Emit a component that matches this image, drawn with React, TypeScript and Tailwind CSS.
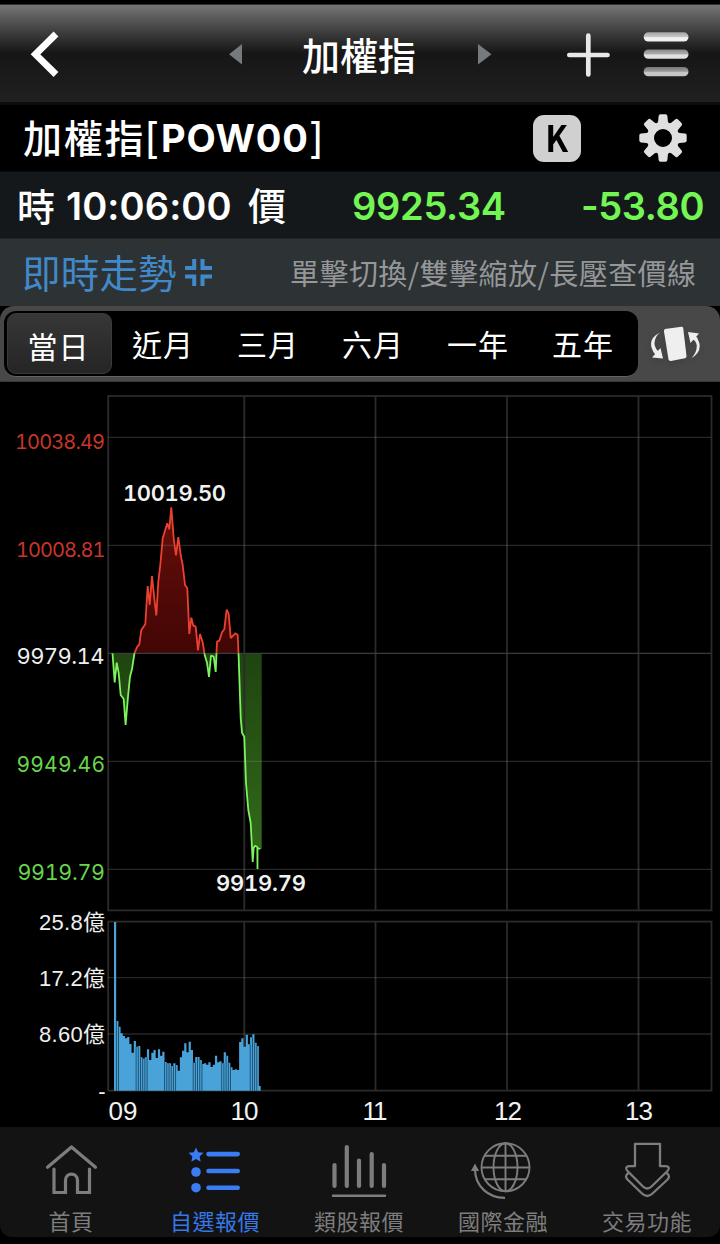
import React from "react";

const CJK = "font-['Inter','Noto_Sans_CJK_TC',sans-serif]";

const pricePoints = [
  [112.5, 653.3], [114.7, 682.5], [116.7, 662.7], [118.7, 673.3], [120.7, 695], [123.7, 699], [125.6, 725], [128, 696.7],
  [130, 676.7], [132, 669], [134.5, 653], [137.3, 646.7], [139.3, 644.3], [141.3, 630], [145.3, 624.3], [147.7, 586],
  [149.7, 605], [152, 576], [154.3, 598.3], [156.3, 615.5], [158.3, 581.7], [160.3, 565], [162.7, 538.3], [167.3, 523.3],
  [169.3, 529.3], [171.3, 507.3], [173.7, 538.3], [176, 555.5], [178.3, 537], [180.7, 555], [182.7, 565], [185, 585],
  [187.3, 588.3], [189.3, 634], [191.3, 617.7], [193.3, 625.7], [195.7, 626.7], [198, 650.5], [200, 634], [202.7, 642.3],
  [204.7, 655], [207, 662.7], [209, 677], [211, 655.7], [213.7, 656.7], [215.7, 672], [217, 641.7], [219.3, 640.7],
  [222, 632.3], [224.3, 629.3], [226.7, 609.5], [228.7, 614], [230.7, 638], [235.3, 633.3], [237.7, 635], [238.7, 658],
  [240.7, 718], [242, 732.7], [244.3, 736.7], [246, 783], [248.3, 810], [250.7, 823], [252.7, 862], [253.7, 848],
  [255, 845.7], [257.3, 847], [257.5, 869], [257.5, 848], [260.3, 849],
];
const line = pricePoints.map((p) => p.join(",")).join(" ");
const area = `112.5,653.3 ${line} 261.7,849 261.7,653.3`;

const volumeTops = [
  66, 363, 380, 400, 408, 415, 411, 432, 458, 423, 440, 438, 472, 476, 472, 448, 480, 458, 450, 474, 448, 467, 455, 486,
  490, 490, 498, 490, 495, 512, 472, 452, 430, 457, 425, 450, 488, 471, 471, 480, 492, 490, 494, 487, 501, 494, 467, 487,
  484, 490, 457, 467, 488, 502, 510, 508, 510, 426, 415, 440, 404, 433, 412, 403, 428, 438, 558,
];
const slits = [1, 2, 10, 11, 12, 13, 14, 15, 23, 24, 25, 26, 27, 28, 36, 37, 38, 39, 40, 49, 50, 51, 52, 53, 62, 63, 64, 65];
const volumePath =
  volumeTops.map((t, i) => `${i ? "L" : "M114 1090.8L"}${114 + i * 2.195} ${900 + t / 3}H${114 + (i + 1) * 2.195 - (i === 66 ? 0.4 : 0)}`).join("") + "V1090.8Z";
const hours: [string, number, number][] = [["09", 123, 29], ["10", 244.5, 28], ["11", 375, 25], ["12", 508, 28], ["13", 639, 28]];

function Chart() {
  const verticals = [244.3, 375.5, 507, 638.5];
  return (
    <svg width="720" height="745" viewBox="0 382 720 745" className="block bg-black">
      <defs>
        <clipPath id="above"><rect x="100" y="390" width="200" height="263.3" /></clipPath>
        <clipPath id="below"><rect x="100" y="653.3" width="200" height="240" /></clipPath>
        <linearGradient id="fall" gradientUnits="userSpaceOnUse" x1="0" y1="653" x2="0" y2="860">
          <stop offset="0" stopColor="#1f4410" /><stop offset="1" stopColor="#326b1b" />
        </linearGradient>
        <linearGradient id="rise" gradientUnits="userSpaceOnUse" x1="0" y1="510" x2="0" y2="653">
          <stop offset="0" stopColor="#650e0b" /><stop offset="1" stopColor="#420604" />
        </linearGradient>
      </defs>
      <polygon points={area} fill="url(#rise)" clipPath="url(#above)" />
      <polygon points={area} fill="url(#fall)" clipPath="url(#below)" />
      <g stroke="#2b2b2b" strokeWidth="1.8" fill="none">
        <rect x="108.2" y="396" width="603.3" height="514.4" />
        <rect x="108.2" y="921.6" width="603.3" height="169" />
        {verticals.map((x) => <path key={x} d={`M${x} 396V910.4M${x} 921.6V1090.6`} />)}
      </g>
      <g stroke="#a0a0a0" strokeOpacity=".24" strokeWidth="1.3">
        {[437.3, 545.3, 761.3, 869.4, 977.7, 1034].map((y) => <path key={y} d={`M108 ${y}H711`} />)}
      </g>
      <path d="M108 653.4H711" stroke="#393c42" strokeWidth="1.4" />
      <polyline points={line} fill="none" stroke="#ed4030" strokeWidth="1.8" strokeLinejoin="bevel" clipPath="url(#above)" />
      <polyline points={line} fill="none" stroke="#7bf35a" strokeWidth="1.8" strokeLinejoin="bevel" clipPath="url(#below)" />
      <path d={volumePath} fill="#49a3d9" />
      {slits.map((i) => (
        <rect key={i} x={113.7 + i * 2.195} y={900 + Math.max(volumeTops[i], volumeTops[i - 1]) / 3} width=".9" height={190.8 - Math.max(volumeTops[i], volumeTops[i - 1]) / 3} fill="#1c4a68" />
      ))}
      <g className="font-['Inter',sans-serif] [font-feature-settings:'tnum']" textAnchor="end">
        <text x="105" y="448.5" textLength="90" className="text-[20px]" fill="#c9352b">10038.49</text>
        <text x="105.5" y="556.5" textLength="89.5" className="text-[20px]" fill="#c9352b">10008.81</text>
        <text x="104.5" y="664" textLength="88" className="text-[22px]" fill="#efefef">9979.14</text>
        <text x="105" y="772" textLength="88.5" className="text-[21px]" fill="#66d64b">9949.46</text>
        <text x="105" y="880.3" textLength="87.5" className="text-[21.5px]" fill="#66d64b">9919.79</text>
      </g>
      <g className="font-['Inter',sans-serif] text-[22px] font-semibold [font-feature-settings:'tnum']" fill="#f2f2f2">
        <text x="123" y="501" textLength="103">10019.50</text>
        <text x="216" y="890.5" textLength="90">9919.79</text>
      </g>
      <g className="font-['Liberation_Sans','Noto_Sans_CJK_TC',sans-serif] text-[22px]" fill="#efefef" textAnchor="end">
        <text x="105" y="930" textLength="66">25.8億</text>
        <text x="105" y="986" textLength="66">17.2億</text>
        <text x="105" y="1042" textLength="66">8.60億</text>
        <text x="105.5" y="1099">-</text>
      </g>
      <g className="font-['Liberation_Sans',sans-serif] text-[26px]" fill="#f2f2f2" textAnchor="middle">
        {hours.map(([h, x, w]) => <text key={h} x={x} y="1120" textLength={w}>{h}</text>)}
      </g>
    </svg>
  );
}

function Gear() {
  return (
    <svg width="48" height="48" viewBox="-24 -24 48 48" fill="#e0e0e0">
      {[0, 45, 90, 135, 180, 225, 270, 315].map((a) => (
        <path key={a} transform={`rotate(${a})`} d="M-6.8-13L-4.9-16.5-4.4-22Q-4.2-23.7-2.5-23.7H2.5Q4.2-23.7 4.4-22L4.9-16.5 6.8-13Z" />
      ))}
      <circle r="12.5" fill="none" stroke="#e0e0e0" strokeWidth="7" />
    </svg>
  );
}

const navIcons = [
  <g key="home" fill="none" stroke="#7d7d7d" strokeWidth="3.2" strokeLinecap="round" strokeLinejoin="round">
    <path d="M47.5 1167.3L71.5 1147 95.5 1167.3" /><path d="M54 1169V1192.5H65.5V1180.5C65.5 1172 77.5 1172 77.5 1180.5V1192.5H89.5V1169" strokeLinejoin="miter" />
  </g>,
  <g key="list" fill="#397cf3">
    <path d="M196 1147.5L198.2 1152.3 203.5 1152.8 199.6 1156.5 200.7 1161.8 196 1159.1 191.3 1161.8 192.4 1156.5 188.5 1152.8 193.8 1152.3Z" />
    <circle cx="196" cy="1172" r="4.8" /><circle cx="196" cy="1187.7" r="4.8" />
    <path d="M208.5 1154.1H237.7M208.5 1171H237.7M208.5 1187.7H237.7" stroke="#397cf3" strokeWidth="4.6" strokeLinecap="round" />
  </g>,
  <g key="bars" stroke="#7d7d7d" strokeWidth="4.2" strokeLinecap="round">
    <path d="M334.5 1165V1186M346.8 1147V1186M359 1160.5V1186M371.7 1154V1186M384 1165V1186" /><path d="M333 1195.7H385" strokeWidth="2.4" />
  </g>,
  <g key="globe" stroke="#7d7d7d" fill="none" strokeWidth="1.9">
    <circle cx="505.5" cy="1167.3" r="24" /><ellipse cx="505.5" cy="1167.3" rx="12" ry="24" />
    <path d="M505.5 1143V1191M481.5 1167.5H529.5M485 1155.7H526M485 1179.2H526" />
    <path d="M475 1169C475 1186 488 1198 505 1197.8" strokeWidth="2.2" /><path d="M475 1165.5L472.5 1170H477.5Z" fill="#7d7d7d" />
  </g>,
  <g key="trade" stroke="#7d7d7d" fill="none" strokeWidth="2.3" strokeLinejoin="round">
    <path d="M635 1143.8H660V1166.2H665.5C669 1166.2 670 1168.5 667.5 1171L651.5 1186.5Q647.3 1190.5 643 1186.5L627.5 1171C625 1168.5 626 1166.2 629.5 1166.2H635Z" />
    <path d="M628.5 1173C625 1175.5 625.5 1177.5 628 1180L642 1193.5Q647.3 1198.5 652.5 1193.5L667 1180C669.5 1177.5 670 1175.5 666.5 1173" />
  </g>,
];
const navItems = ["首頁", "自選報價", "類股報價", "國際金融", "交易功能"];

export default function App() {
  return (
    <div className={`flex h-[1244px] w-[720px] flex-col overflow-hidden bg-black text-white ${CJK}`}>
      <div className="h-1 shrink-0 bg-black" />
      <header className="flex h-[101px] shrink-0 items-center border-t border-b-[3px] border-t-[#303030] border-b-[#0c0c0c] bg-linear-to-b from-[#767676] from-0% via-[#161616] via-50% to-[#202020] to-100%">
        <svg width="302" height="97" viewBox="0 5 302 97" className="shrink-0">
          <path d="M56 34L35.5 54.3 56 74.5" fill="none" stroke="#fff" strokeWidth="6.8" />
          <path d="M229 54.3L242 44V64.5Z" fill="#747a7e" />
        </svg>
        <h1 className="w-[116px] shrink-0 pt-1 text-[38px] leading-[50px] font-medium whitespace-nowrap">加權指</h1>
        <svg width="302" height="97" viewBox="418 5 302 97" className="shrink-0">
          <defs>
            <linearGradient id="barA" x2="0" y2="1"><stop stopColor="#a5a5a5" /><stop offset=".45" stopColor="#c5c5c5" /><stop offset=".6" stopColor="#f4f4f4" /><stop offset="1" stopColor="#eee" /></linearGradient>
            <linearGradient id="barB" x2="0" y2="1"><stop stopColor="#888" /><stop offset=".45" stopColor="#aaa" /><stop offset=".6" stopColor="#e2e2e2" /><stop offset="1" stopColor="#ddd" /></linearGradient>
            <linearGradient id="barC" x2="0" y2="1"><stop stopColor="#777" /><stop offset=".45" stopColor="#999" /><stop offset=".6" stopColor="#c8c8c8" /><stop offset="1" stopColor="#c4c4c4" /></linearGradient>
          </defs>
          <path d="M478 44L491.5 54.3 478 64.5Z" fill="#747a7e" />
          <path d="M569.3 55H607.5M588.3 35.7V74.5" stroke="#e8e8e8" strokeWidth="4.7" strokeLinecap="round" />
          <rect x="643.7" y="32.3" width="44.8" height="9.2" rx="4.6" fill="url(#barA)" />
          <rect x="643.7" y="49.5" width="44.8" height="9.3" rx="4.6" fill="url(#barB)" />
          <rect x="643.7" y="67" width="44.8" height="9.3" rx="4.6" fill="url(#barC)" />
        </svg>
      </header>

      <section className="flex h-[66px] shrink-0 items-center pl-[23px]">
        <h2 className="flex w-[510px] items-center text-[39px] leading-[56px] font-medium whitespace-nowrap">
          <span className="w-[121px] pt-0.5 tracking-[1.8px]">加權指</span>
          <span className="w-[17px] text-[42px] leading-[56px] font-normal">[</span>
          <span className="text-[38px] font-bold tracking-[0.8px]">POW00</span>
          <span className="text-[42px] leading-[56px] font-normal">]</span>
        </h2>
        <div className="flex h-[47px] w-[48px] items-center justify-center rounded-[11px] bg-[#d0d0d0] font-['Noto_Sans_CJK_TC',sans-serif] text-black">
          <span className="scale-x-90 pb-[5px] text-[37px] leading-[42px] font-bold">K</span>
        </div>
        <div className="ml-[58px]"><Gear /></div>
      </section>

      <section className="flex h-[68px] shrink-0 items-center border-b border-t border-t-[#080b0d] border-b-[#1d2326] bg-[#14181b] text-[38px] leading-[56px] font-medium whitespace-nowrap">
        <span className="ml-[17px] w-[49px] pt-1 text-[38px]">時</span>
        <span className="w-[182px] pt-0.5 text-[38px] font-semibold tracking-[0.1px]">10:06:00</span>
        <span className="w-[104px] pt-0.5 text-[38px]">價</span>
        <span className="w-[229px] pt-0.5 text-[38px] font-semibold tracking-[-0.3px] text-[#73f654]">9925.34</span>
        <span className="pt-0.5 text-[38px] font-semibold tracking-[-0.4px] text-[#73f654] [font-feature-settings:'calt'_0]">-53.80</span>
      </section>

      <section className="flex h-[67px] shrink-0 items-center bg-[#2d3235] whitespace-nowrap">
        <span className="ml-[22px] w-[162px] pt-0.5 text-[38.5px] leading-[56px] tracking-[0.2px] text-[#4189c9]">即時走勢</span>
        <svg width="29" height="29" viewBox="0 0 29 29" fill="none" stroke="#4189c9" strokeWidth="4">
          <path d="M1 10H10.2V1M18.5 1V10H28M1 18.5H10.2V28M18.5 28V18.5H28" />
        </svg>
        <span className="ml-[77px] pb-px font-['Noto_Sans_CJK_TC',sans-serif] text-[29px] leading-10 font-normal tracking-[0.45px] text-[#959798]">單擊切換/雙擊縮放/長壓查價線</span>
      </section>

      <section className="flex h-[76px] shrink-0 items-center rounded-t-[14px] border-b border-[#393939] bg-[#484848] pl-1">
        <div className="flex h-[66px] w-[634px] items-center rounded-[12px] border-b border-[#646464] bg-black text-[30px] leading-10 tracking-[1px]">
          <button className="ml-[3px] flex h-[61px] w-[105px] items-center justify-center rounded-[9px] border border-[#3b3b3b] bg-linear-to-b from-[#373737] to-[#252525] pt-[7px] pr-0.5">當日</button>
          {["近月", "三月", "六月", "一年", "五年"].map((t) => <button key={t} className="w-[105px] shrink-0 pt-1 pr-[3px] text-center">{t}</button>)}
        </div>
        <svg width="52" height="40" viewBox="649 324 52 40" className="ml-[11px] drop-shadow-md">
          <path d="M665 329L681.5 326.8Q683 326.8 683.2 328L686.5 356Q686.5 358 685 358.3L671 361Q669 361 668.5 359.5L664 331.5Q663.7 329.5 665 329Z" fill="#efefef" />
          <path d="M660 332.5Q649 338 651.5 347.5Q653 353 656.5 356L659.5 352Q655 349 654.5 344Q654.3 337 660 332.5Z" fill="#ededed" />
          <path d="M652 357.5L663 358.5 660.5 348Z" fill="#eee" />
          <path d="M691.5 358Q701.5 352 699.3 343Q698 337.5 694.5 334.5L692 338.5Q696.3 341 696.8 345.5Q697 352.5 691.5 358Z" fill="#ededed" />
          <path d="M688 332L699 333.5 690.5 343Z" fill="#eee" />
        </svg>
      </section>

      <main className="h-[745px] shrink-0"><Chart /></main>

      <nav className="flex h-[110px] shrink-0 rounded-b-[12px] bg-[#131313]">
        {navItems.map((label, i) => (
          <button key={label} className={`flex w-36 shrink-0 flex-col items-center whitespace-nowrap ${i === 1 ? "text-[#3678e8]" : "text-[#7d7d7d]"}`}>
            <svg width="144" height="77" viewBox={`${i * 144} 1127 144 77`} className="shrink-0">{navIcons[i]}</svg>
            <span className="pt-0.5 pr-0.5 text-[22px] leading-8 tracking-[0.5px]">{label}</span>
          </button>
        ))}
      </nav>
    </div>
  );
}
